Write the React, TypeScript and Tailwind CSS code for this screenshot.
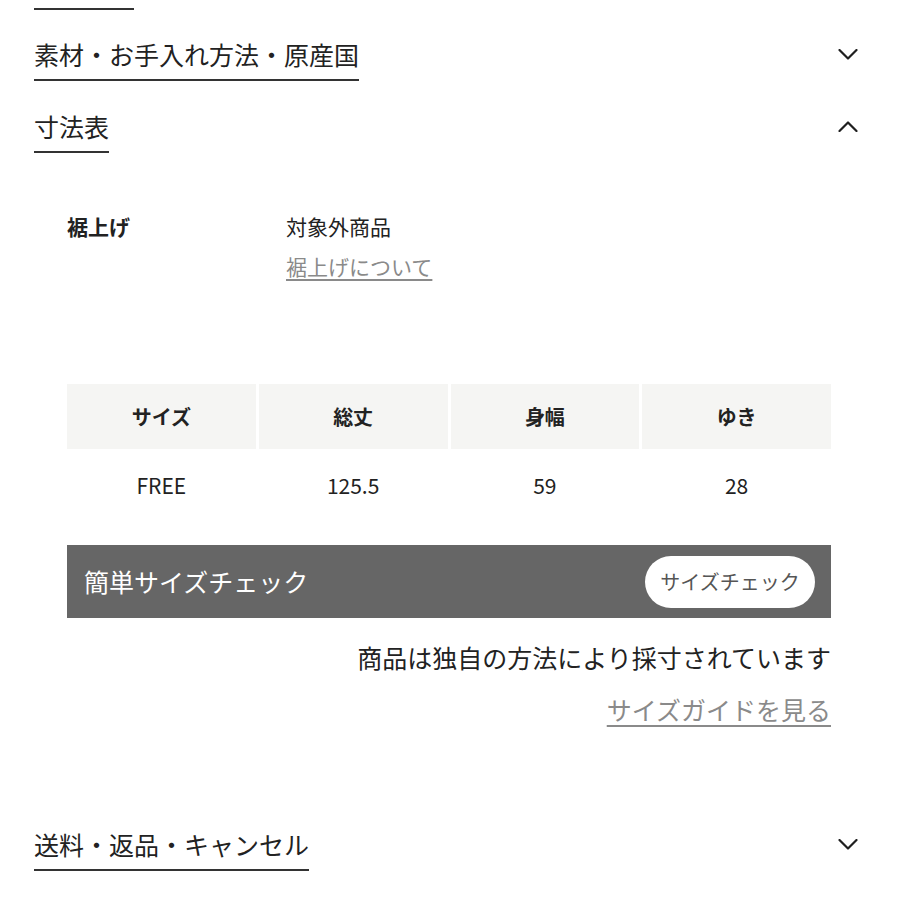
import React from 'react';

const font = { fontFamily: '"Noto Sans CJK JP", "Noto Sans", sans-serif' };

function Chevron({ up = false }: { up?: boolean }) {
  return (
    <svg width="20" height="11" viewBox="0 0 20 11" fill="none" className="block">
      <path
        d={up ? 'M1.5 10 L10 1.5 L18.5 10' : 'M1.5 1 L10 9.5 L18.5 1'}
        stroke="#1f1f1f"
        strokeWidth="2.2"
        strokeLinecap="round"
        strokeLinejoin="round"
      />
    </svg>
  );
}

function SectionHeading({ title, open = false }: { title: string; open?: boolean }) {
  return (
    <div className="flex items-start justify-between">
      <span className="border-b-2 border-[#333] pb-[7px] text-[25px] leading-[35px] text-[#222]">{title}</span>
      <div className="flex h-[35px] items-center">
        <Chevron up={open} />
      </div>
    </div>
  );
}

const headers = ['サイズ', '総丈', '身幅', 'ゆき'];
const values = ['FREE', '125.5', '59', '28'];

export default function App() {
  return (
    <div className="min-h-[900px] bg-white pl-[34px] pr-[42px]" style={font}>
      {/* previous section underline, cut off */}
      <div className="h-[2px] w-[100px] bg-[#333] mt-[8px]" />

      <div className="pt-[27px]">
        <SectionHeading title="素材・お手入れ方法・原産国" />
      </div>

      <div className="pt-[28px]">
        <SectionHeading title="寸法表" open />
      </div>

      {/* size table section */}
      <div className="pl-[33px] pr-[27px]">
        <div className="mt-[58px] flex text-[21px] leading-[30px] text-[#222]">
          <div className="w-[219px] font-bold">裾上げ</div>
          <div className="flex flex-col gap-[10px]">
            <span>対象外商品</span>
            <a className="text-[#8a8a8a] underline underline-offset-[4px] decoration-[1.5px]">裾上げについて</a>
          </div>
        </div>

        <div className="mt-[103px] grid grid-cols-4 gap-x-[3px]">
          {headers.map((h) => (
            <div key={h} className="flex h-[65px] items-center justify-center bg-[#f5f5f3] text-[20px] font-bold text-[#222]">
              {h}
            </div>
          ))}
          {values.map((v) => (
            <div key={v} className="flex h-[74px] items-center justify-center text-[21px] text-[#222]">
              {v}
            </div>
          ))}
        </div>

        <div className="mt-[22px] flex h-[73px] items-center justify-between bg-[#666] pl-[17px] pr-[16px]">
          <span className="text-[25px] text-white">簡単サイズチェック</span>
          <button className="flex h-[52px] w-[170px] items-center justify-center rounded-full bg-white text-[20px] text-[#555]">
            サイズチェック
          </button>
        </div>

        <div className="mt-[22px] flex flex-col items-end gap-[17px] text-[25px] leading-[35px]">
          <span className="text-[#222]">商品は独自の方法により採寸されています</span>
          <a className="text-[#8a8a8a] underline underline-offset-[5px] decoration-[1.5px]">サイズガイドを見る</a>
        </div>
      </div>

      <div className="pt-[100px]">
        <SectionHeading title="送料・返品・キャンセル" />
      </div>
    </div>
  );
}
